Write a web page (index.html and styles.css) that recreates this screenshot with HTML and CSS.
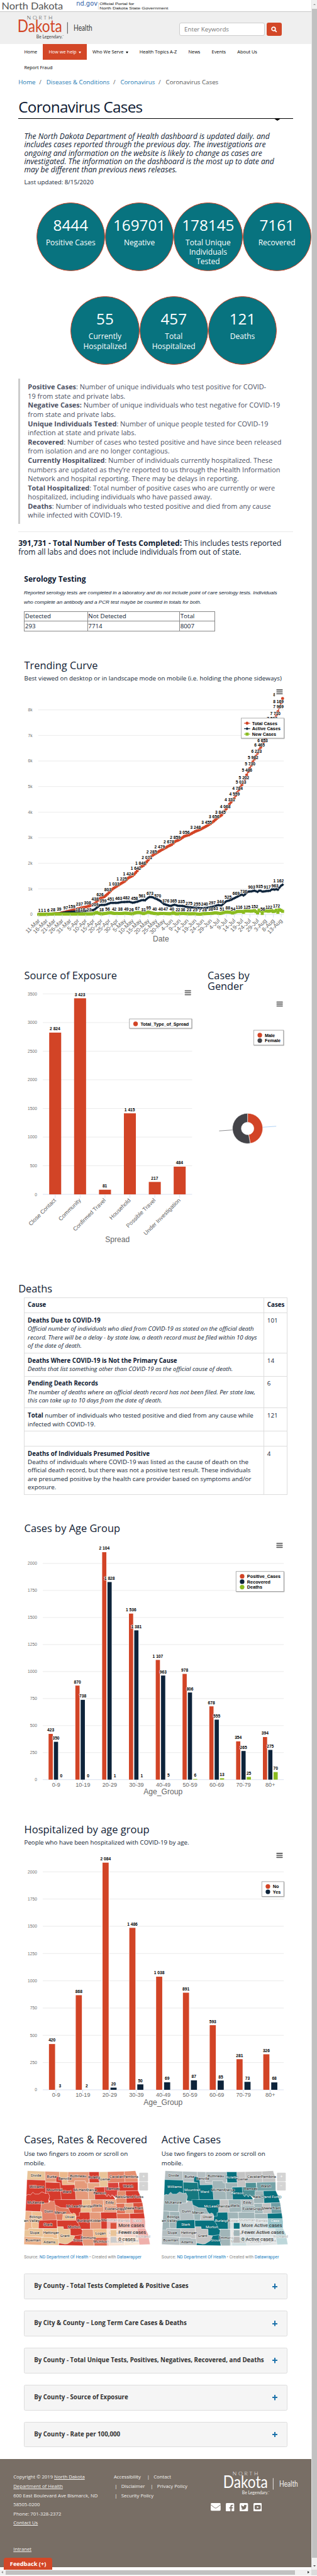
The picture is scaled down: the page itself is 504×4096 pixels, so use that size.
FILE: index.html
```html
<!DOCTYPE html>
<html lang="en">
<head>
<meta charset="utf-8">
<title>Coronavirus Cases | Department of Health</title>
<link rel="stylesheet" href="styles.css">
</head>
<body>
<div class="window">
<div class="page">
  <div class="topbar">
    <svg width="460" height="31" viewBox="0 0 460 31">
      <text x="4" y="24.5" class="tb-nd" font-size="26.5" textLength="161" lengthAdjust="spacingAndGlyphs">North Dakota</text>
      <text x="199.500" y="14.500" class="tb-gov" font-size="16" textLength="56" lengthAdjust="spacingAndGlyphs">nd.gov</text>
      <path d="M257.500 6v19" stroke="#bbb"/>
      <text x="260.500" y="14" class="tb-off" font-size="9.600" textLength="91" lengthAdjust="spacingAndGlyphs">Official Portal for</text>
      <text x="260.500" y="24.700" class="tb-off" font-size="9.600" textLength="180" lengthAdjust="spacingAndGlyphs">North Dakota State Government</text>
    </svg>
  </div>
  <header class="header">
    <svg class="logo logo-dark" width="200" height="70" viewBox="0 0 200 70">
      <text class="lg-north" x="22.5" y="14.5" font-size="14" textLength="67">NORTH</text>
      <text class="lg-main" x="-2" y="47" font-size="44" textLength="117" lengthAdjust="spacingAndGlyphs">Dakota</text>
      <text class="lg-small" x="47.5" y="65" font-size="11.3" textLength="69" lengthAdjust="spacingAndGlyphs">Be Legendary.</text>
      <text class="lg-small" x="116" y="60" font-size="4">™</text>
      <path class="lg-bar" d="M129 22v30"/>
      <text class="lg-dept" x="145" y="44.5" font-size="20.5" textLength="49" lengthAdjust="spacingAndGlyphs">Health</text>
    </svg>
    <form class="search">
      <div class="field">Enter Keywords</div>
      <div class="go"><svg width="16" height="16" viewBox="0 0 16 16"><circle cx="6.500" cy="6.500" r="4.700"/><path d="M10 10l4.500 4.500"/></svg></div>
    </form>
  </header>
  <nav class="nav">
    <a>Home</a><a class="active">How we help <i class="caret"></i></a><a>Who We Serve <i class="caret"></i></a><a>Health Topics A-Z</a><a>News</a><a>Events</a><a>About Us</a><a>Report Fraud</a>
  </nav>
  <div class="crumbs"><a>Home</a><s>/</s><a>Diseases &amp; Conditions</a><s>/</s><a>Coronavirus</a><s>/</s><span>Coronavirus Cases</span></div>
  <h1>Coronavirus Cases</h1>
  <p class="intro">The North Dakota Department of Health dashboard is updated daily. and<br>includes cases reported through the previous day. The investigations are<br>ongoing and information on the website is likely to change as cases are<br>investigated. The information on the dashboard is the most up to date and<br>may be different than previous news releases.</p>
  <p class="updated">Last updated: 8/15/2020</p>
  <div class="circles">
    <div class="circle"><b>8444</b><span>Positive Cases</span></div>
    <div class="circle"><b>169701</b><span>Negative</span></div>
    <div class="circle"><b>178145</b><span>Total Unique<br>Individuals<br>Tested</span></div>
    <div class="circle"><b>7161</b><span>Recovered</span></div>
  </div>
  <div class="circles second">
    <div class="circle"><b>55</b><span>Currently<br>Hospitalized</span></div>
    <div class="circle"><b>457</b><span>Total<br>Hospitalized</span></div>
    <div class="circle"><b>121</b><span>Deaths</span></div>
  </div>
  <blockquote><strong>Positive Cases</strong>: Number of unique individuals who test positive for COVID-<br>19 from state and private labs.<br><strong>Negative Cases:</strong> Number of unique individuals who test negative for COVID-19<br>from state and private labs.<br><strong>Unique Individuals Tested</strong>: Number of unique people tested for COVID-19<br>infection at state and private labs.<br><strong>Recovered</strong>: Number of cases who tested positive and have since been released<br>from isolation and are no longer contagious.<br><strong>Currently Hospitalized</strong>: Number of individuals currently hospitalized. These<br>numbers are updated as they’re reported to us through the Health Information<br>Network and hospital reporting. There may be delays in reporting.<br><strong>Total Hospitalized</strong>: Total number of positive cases who are currently or were<br>hospitalized, including individuals who have passed away.<br><strong>Deaths</strong>: Number of individuals who tested positive and died from any cause<br>while infected with COVID-19.</blockquote>
  <div class="rule"></div>
  <p class="tests"><strong>391,731 - Total Number of Tests Completed:</strong> This includes tests reported<br>from all labs and does not include individuals from out of state.</p>
  <h4 class="serology">Serology Testing</h4>
  <p class="note">Reported serology tests are completed in a laboratory and do not include point of care serology tests. Individuals<br>who complete an antibody and a PCR test maybe be counted in totals for both.</p>
  <table class="sero">
    <tr><td>Detected</td><td>Not Detected</td><td>Total</td></tr>
    <tr><td>293</td><td>7714</td><td>8007</td></tr>
  </table>

  <h3 class="trend-title">Trending Curve</h3>
  <p class="sub">Best viewed on desktop or in landscape mode on mobile (i.e. holding the phone sideways)</p>
  <svg class="chart" id="trend" width="815" height="741" viewBox="0 1789 815 741"></svg>

  <div class="pair">
    <section><h3>Source of Exposure</h3>
      <svg class="chart" id="exposure" width="530" height="741" viewBox="0 2569 530 741"></svg></section>
    <section class="gender"><h3>Cases by<br>Gender</h3>
      <svg class="chart" id="gender" width="285" height="712" viewBox="530 2598 285 712"></svg></section>
  </div>

  <h3 class="deaths-title">Deaths</h3>
  <table class="deaths">
    <tr class="r0"><th>Cause</th><th>Cases</th></tr>
    <tr class="r1"><td><strong>Deaths Due to COVID-19</strong><br><em>Official number of individuals who died from COVID-19 as stated on the official death<br>record. There will be a delay - by state law, a death record must be filed within 10 days<br>of the date of death.</em></td><td>101</td></tr>
    <tr class="r2"><td><strong>Deaths Where COVID-19 is Not the Primary Cause</strong><br><em>Deaths that list something other than COVID-19 as the official cause of death.</em></td><td>14</td></tr>
    <tr class="r3"><td><strong>Pending Death Records</strong><br><em>The number of deaths where an official death record has not been filed. Per state law,<br>this can take up to 10 days from the date of death.</em></td><td>6</td></tr>
    <tr class="r4"><td><strong>Total</strong> number of individuals who tested positive and died from any cause while<br>infected with COVID-19.</td><td>121</td></tr>
    <tr class="r5"><td></td><td></td></tr>
    <tr class="r6"><td><strong>Deaths of Individuals Presumed Positive</strong><br>Deaths of individuals where COVID-19 was listed as the cause of death on the<br>official death record, but there was not a positive test result. These individuals<br>are presumed positive by the health care provider based on symptoms and/or<br>exposure.</td><td>4</td></tr>
  </table>

  <h3 class="age-title">Cases by Age Group</h3>
  <svg class="chart" id="age" width="815" height="746" viewBox="0 4014 815 746"></svg>

  <h3 class="hosp-title">Hospitalized by age group</h3>
  <p class="sub hosp-sub">People who have been hospitalized with COVID-19 by age.</p>
  <svg class="chart" id="hosp" width="815" height="725" viewBox="0 4835 815 725"></svg>

  <div class="maps">
    <section><h3>Cases, Rates &amp; Recovered</h3><p>Use two fingers to zoom or scroll on<br>mobile.</p>
      <svg class="chart map" id="map-cases" width="335" height="217" viewBox="63 5673 335 217"></svg>
      <div class="source">Source: <a>ND Department Of Health</a> • Created with <a>Datawrapper</a></div></section>
    <section><h3>Active Cases</h3><p>Use two fingers to zoom or scroll on<br>mobile.</p>
      <svg class="chart map" id="map-active" width="335" height="217" viewBox="63 5673 335 217"></svg>
      <div class="source">Source: <a>ND Department Of Health</a> • Created with <a>Datawrapper</a></div></section>
  </div>

  <div class="panels">
    <div class="panel"><span>By County - Total Tests Completed &amp; Positive Cases</span><i class="plus"></i></div>
    <div class="panel"><span>By City &amp; County – Long Term Care Cases &amp; Deaths</span><i class="plus"></i></div>
    <div class="panel"><span>By County - Total Unique Tests, Positives, Negatives, Recovered, and Deaths</span><i class="plus"></i></div>
    <div class="panel"><span>By County - Source of Exposure</span><i class="plus"></i></div>
    <div class="panel"><span>By County - Rate per 100,000</span><i class="plus"></i></div>
  </div>

  <footer class="footer">
    <div class="f-left">Copyright © 2019 <u>North Dakota</u><br><u>Department of Health</u><br>600 East Boulevard Ave Bismarck, ND<br>58505-0200<br>Phone: 701-328-2372<br><u>Contact Us</u><div class="intranet"><u>Intranet</u></div></div>
    <div class="f-mid">
      <div><span class="first">Accessibility</span><s>|</s><span>Contact</span></div>
      <div><s>|</s><span>Disclaimer</span><s class="gap">|</s><span>Privacy Policy</span></div>
      <div><s>|</s><span>Security Policy</span></div>
    </div>
    <div class="f-right">
      <svg class="logo logo-light" width="200" height="70" viewBox="0 0 200 70">
        <text class="lg-north" x="22.5" y="14.5" font-size="14" textLength="67">NORTH</text>
        <text class="lg-main" x="-2" y="47" font-size="44" textLength="117" lengthAdjust="spacingAndGlyphs">Dakota</text>
        <text class="lg-small" x="47.5" y="65" font-size="11.3" textLength="69" lengthAdjust="spacingAndGlyphs">Be Legendary.</text>
        <text class="lg-small" x="116" y="60" font-size="4">™</text>
        <path class="lg-bar" d="M129 22v30"/>
        <text class="lg-dept" x="145" y="44.5" font-size="20.5" textLength="49" lengthAdjust="spacingAndGlyphs">Health</text>
      </svg>
      <div class="social">
        <svg width="26" height="20" viewBox="0 0 26 20"><rect width="26" height="20" rx="2.500" fill="#fff"/><path d="M0 4.500l10.500 8q2.500 1.800 5 0L26 4.500" fill="none" stroke="#786e65" stroke-width="1.500"/></svg>
        <svg width="22" height="22" viewBox="0 0 22 22"><rect width="22" height="22" rx="2.500" fill="#fff"/><path d="M12 22v-8H9v-3h3V8.500Q12 4.500 16 4.500h3v3h-2.200q-1.500 0-1.500 1.500v2H19l-.5 3h-3.200v8z" fill="#786e65"/></svg>
        <svg width="22" height="22" viewBox="0 0 22 22"><rect width="22" height="22" rx="2.500" fill="#fff"/><path d="M4 5.500q3 3.200 7 3.400Q10.600 5 14 4.700q1.500 0 2.500 1l2-.7-1 1.700 1.500-.3-1.500 1.600Q17.500 17 9 17.300q-3 0-5.500-1.500 2.700 0 4.200-1.300-2-.3-2.700-2h1.200Q4 11.500 3.900 9.300l1.200.3Q3 7.800 4 5.500" fill="#786e65"/></svg>
        <svg width="22" height="22" viewBox="0 0 22 22"><rect width="22" height="22" rx="2.500" fill="#fff"/><rect x="3" y="5" width="16" height="12" rx="3" fill="#786e65"/><path d="M9.300 8.200v5.600l4.800-2.800z" fill="#fff"/></svg>
      </div>
    </div>
    <div class="feedback">Feedback (+)</div>
  </footer>
</div>
<div class="vscroll"><i class="up"></i><b></b><i class="down"></i></div>
<div class="hscroll"><i class="left"></i><b></b><i class="right"></i></div>
<div class="corner"></div>
</div>
<script src="charts.js"></script>
</body>
</html>
```
FILE: styles.css
```css
* { box-sizing: border-box; }
html { overflow: hidden; background: #fff; }
body { margin: 0; zoom: .6072; width: 830px; height: 6744px; overflow: hidden; font: 16px/24px "Open Sans", sans-serif; color: #0f1b33; white-space: nowrap; }
h1, h3, h4, p, blockquote { margin: 0; font-weight: 400; }
s { text-decoration: none; }
i { font-style: normal; }
svg { display: block; }
.window { width: 830px; height: 6744px; display: grid; grid-template-columns: 815px 15px; grid-template-rows: 6729px 15px; overflow: hidden; }
.page { width: 815px; height: 6729px; overflow: hidden; display: flex; flex-direction: column; align-items: flex-start; }
.page > * { flex: none; }

.topbar { width: 815px; height: 32px; border-bottom: 1px solid #c8c8c8; }
.tb-nd { font-family: Lato, sans-serif; fill: #555; }
.tb-gov { font-family: "DejaVu Sans", sans-serif; fill: #2f62a8; }
.tb-off { font-family: "Liberation Sans", sans-serif; fill: #4a4a4a; stroke: #4a4a4a; stroke-width: .2; }
.header { width: 815px; height: 84px; background: #efefef; display: flex; justify-content: space-between; padding: 5px 77px 0 48px; }
.logo { font-family: Lato, sans-serif; overflow: visible; }
.logo-dark { color: #3d3d3d; --main: #d24626; }
.logo-light { color: #f2f0ee; --main: #fff; }
.lg-main { fill: var(--main); }
.lg-north, .lg-small, .lg-dept { fill: currentColor; }
.lg-north { font-weight: 300; }
.lg-bar { stroke: currentColor; stroke-width: 1.500; }
.search { display: flex; gap: 4px; padding-top: 23px; }
.field { width: 224px; height: 34px; border: 1px solid #ccc; border-radius: 5px; background: #fff; color: #757575; padding: 4px 11px; }
.go { width: 40px; height: 34px; border-radius: 5px; background: #d34727; display: flex; align-items: center; justify-content: center; }
.go svg { fill: none; stroke: #fff; stroke-width: 2.800; }

.nav { width: 720px; height: 80px; margin-left: 48.300px; display: flex; flex-wrap: wrap; font-size: 12.150px; color: #000; }
.nav a { height: 40px; line-height: 40px; padding: 0 15px; }
.nav .active { background: #d34727; color: #fff; }
.caret { display: inline-block; border: 4px solid transparent; border-top: 5px solid; border-bottom: 0; margin-left: 2px; vertical-align: 1px; }

.crumbs { margin: 9px 0 0 48px; display: flex; color: #1d7ab3; }
.crumbs s { color: #666; padding: 0 13px 0 9.500px; }
.crumbs span { color: #555; }
h1 { width: 720px; height: 54px; margin: 28px 0 0 48px; font-size: 40px; line-height: 45px; letter-spacing: -1.150px; color: #0e1a33; border-bottom: 1.600px solid #000; position: relative; }
h1::after { content: ""; position: absolute; right: 32px; top: 100%; border: 11px solid transparent; border-top: 7px solid #000; border-bottom: 0; }
.intro { margin: 35px 0 0 63.500px; font-size: 19.900px; line-height: 22px; font-style: italic; }
.updated { margin: 10px 0 0 63.500px; }

.circles { display: flex; margin: 40px 0 0 95px; }
.circles.second { margin: 66px 0 0 185px; }
.circle { width: 180px; height: 180px; border-radius: 50%; border: 3px solid #d04427; background: #08737f; color: #fff; display: flex; flex-direction: column; text-align: center; padding-top: 33px; }
.circle b { font-weight: 400; font-size: 40px; line-height: 50px; }
.circle span { font-size: 19.800px; line-height: 25px; padding-top: 8px; }

blockquote { width: 720px; height: 380px; margin: 36px 0 0 48px; border-left: 5px solid #ccc; padding: 10px 20px; font-size: 18px; line-height: 24px; color: #4b4f62; }
.rule { width: 720px; height: 1.600px; margin: 20px 0 -.6px 48px; background: #e9e9e9; }
.tests { margin: 19px 0 0 48px; font-size: 19.850px; line-height: 22.200px; }
.serology { margin: 49px 0 0 63px; font-size: 19.850px; font-weight: 700; }
.note { margin: 10px 0 0 62.500px; font: italic 13.340px/26px "Liberation Sans", sans-serif; }
table { border-collapse: collapse; table-layout: fixed; }
.sero { width: 500px; height: 51px; margin: 9.500px 0 0 63px; border: 1.600px solid #222; font-size: 16.100px; }
.sero td { border: 1.600px solid #888; padding: 0 1px; height: 25.300px; line-height: 22px; }
.sero td:nth-child(1) { width: 165.500px; }
.sero td:nth-child(2) { width: 241px; }

h3 { font-size: 27.050px; line-height: 30px; }
.trend-title { margin: 74px 0 0 63.500px; }
.sub { margin: 9px 0 0 63.500px; font-size: 16.170px; }
.chart { font-family: "Liberation Sans", Arial, sans-serif; overflow: hidden; }
.pair { display: flex; height: 780px; }
.pair section { padding-top: 10px; width: 530px; }
.pair .gender { width: 285px; }
.pair h3 { line-height: 29px; margin-left: 63.500px; font-size: 26.930px; }
.pair .gender h3 { margin-left: 13.500px; }

.deaths-title { margin: 48px 0 0 48px; }
.deaths { width: 690px; height: 516px; margin: 8px 0 0 63px; font-size: 16.100px; line-height: 22px; }
.deaths th, .deaths td { border: 1.600px solid #ddd; padding: 8px 8px 0; text-align: left; vertical-align: top; }
.deaths th:first-child, .deaths td:first-child { width: 627px; }
.deaths strong { font-size: 15.950px; }
.deaths em { font-size: 15.800px; }
.r0 { height: 40.500px; } .r1 { height: 105px; } .r2 { height: 60.500px; } .r3 { height: 83.500px; }
.r4 { height: 60.500px; } .r5 { height: 39px; } .r6 { height: 127px; }

.age-title { margin: 72px 0 0 63.500px; }
.hosp-title { margin: 13px 0 0 63.500px; font-size: 27.200px; }
.hosp-sub { margin-top: 8px; font-size: 16.040px; }

.maps { display: flex; margin-left: 63px; height: 358px; padding-top: 26px; }
.maps section { width: 360px; }
.maps p { margin-top: 9px; font-size: 16.230px; line-height: 24px; }
.map { font-family: Roboto, sans-serif; }
.source { font: 11.290px/20px Roboto, sans-serif; color: #888; margin-top: 8px; }
.source a { color: #1d81c2; }

.panels { margin: 34px 0 0 63px; width: 690px; display: flex; flex-direction: column; gap: 30.500px; }
.panel { height: 66.500px; border: 1px solid #ddd; border-bottom: 3px solid #ddd; border-radius: 4px; background: #f5f5f5; color: #333; font-size: 16px; font-weight: 700; display: flex; align-items: center; justify-content: space-between; padding: 0 25px 0 24.500px; }
.plus { width: 14px; height: 14px; background: linear-gradient(#1d72aa, #1d72aa) center/14px 3.300px no-repeat, linear-gradient(#1d72aa, #1d72aa) center/3.300px 14px no-repeat; }

.footer { margin-top: 30.500px; width: 815px; height: 283px; background: #786e65; color: #f3f1ef; font-size: 12.700px; line-height: 24px; display: flex; position: relative; padding-top: 35.500px; }
.f-left { width: 263px; padding-left: 35px; }
.intranet { margin-top: 44.500px; }
.f-mid { width: 289px; padding-left: 35px; }
.f-mid div { display: flex; }
.f-mid s { padding: 0 10.500px 0 2px; }
.f-mid .first + s { padding-left: 16px; }
.f-mid .gap { padding-left: 14.500px; }
.f-right { margin-top: -8px; }
.f-right .logo { margin-left: 35px; }
.social { display: flex; align-items: center; gap: 14px; margin-top: 17.500px; }
.feedback { position: absolute; left: 10px; bottom: -8px; width: 127px; height: 33px; border-radius: 6px 6px 0 0; background: #d34727; color: #fff; font-size: 15.200px; font-weight: 700; line-height: 33px; text-align: center; }

.vscroll { background: #f1f1f1; display: flex; flex-direction: column; align-items: center; border-left: 1px solid #e6e6e6; }
.vscroll b { width: 12px; height: 6675px; background: #c1c1c1; margin: 9px 0 20px; }
.up, .down { border: 4px solid transparent; height: 4px; }
.up { margin-top: 10px; border-bottom-color: #999; border-top: 0; }
.down { border-top-color: #444; border-bottom: 0; }
.hscroll { background: #f1f1f1; display: flex; align-items: center; }
.hscroll b { width: 757px; height: 12px; background: #c1c1c1; margin: 0 35px 0 6px; }
.left, .right { border: 4px solid transparent; }
.left { border-right: 5px solid #999; border-left: 0; margin-left: 4px; }
.right { border-left: 5px solid #333; border-right: 0; margin-left: -2px; }
.corner { background: #dcdcdc; }

.grid { stroke: #e3e3e3; stroke-width: 1.200; fill: none; }
.axis { stroke: #ccd6eb; stroke-width: 1.200; fill: none; }
.ylab { font-size: 11px; fill: #707070; text-anchor: end; }
.xlab { font-size: 15px; fill: #666; text-anchor: middle; }
.xrot { text-anchor: end; }
.title { font-size: 20px; fill: #666; text-anchor: middle; }
.dl { font-size: 11px; font-weight: 700; fill: #000; text-anchor: middle; stroke: #fff; stroke-width: 2px; paint-order: stroke; stroke-linejoin: round; }
.leg { font-size: 12px; font-weight: 700; fill: #000; }
.legbox { fill: #fff; stroke: #999; stroke-width: 1.200; filter: drop-shadow(1px 1px 1px rgba(0,0,0,.35)); }
.burger { stroke: #666; stroke-width: 3; stroke-linecap: round; }
.county { stroke: #fff; stroke-opacity: .6; stroke-width: 2.500; stroke-linejoin: round; }
.cl { font-size: 30px; fill: #222; text-anchor: middle; stroke: #fff; stroke-opacity: .55; stroke-width: 7; paint-order: stroke; stroke-linejoin: round; }
.cl.inv { fill: #fff; stroke: #045560; }
.ml { font-size: 39px; fill: #222; }
.zb { fill: #d4d4d4; }
.zt { font-size: 34px; fill: #fff; text-anchor: middle; }
```
FILE: charts.js
```js
// Chart drawing: every helper returns SVG markup, coordinates are page pixels.
const RED = '#d24426', NAVY = '#0d233a', GREEN = '#8bbc21';
const K = 1.8892;                       // horizontal units per page pixel in the data tables
const put = (id, html) => { document.getElementById(id).innerHTML = html; };
const txt = (cls, x, y, s, extra = '') => `<text class="${cls}" x="${x}" y="${y}" ${extra}>${s}</text>`;
const fmt = n => n > 999 ? Math.floor(n / 1000) + ' ' + String(n % 1000).padStart(3, '0') : String(n);
const burger = (x, y) => `<path class="burger" d="M${x} ${y}h14M${x} ${y + 5.1}h14M${x} ${y + 10.2}h14"/>`;

function gridLines(x1, x2, y0, unit, step, max, labelX, k) {
  let s = '';
  for (let v = 0; v <= max; v += step) {
    const y = y0 - v * unit;
    if (v) s += `<path class="grid" d="M${x1} ${y}H${x2}"/>`;
    s += txt('ylab', labelX, y + 4, k && v ? v / 1000 + 'k' : v);
  }
  return s + `<path class="axis" d="M${x1} ${y0}H${x2}"/>`;
}
function legend(x, y, w, h, names, colors, first) {
  let s = `<rect class="legbox" x="${x}" y="${y}" width="${w}" height="${h}"/>`;
  names.forEach((n, i) => {
    const cy = first + i * 14.1;
    s += `<circle cx="${x + 16}" cy="${cy}" r="6" fill="${colors[i]}"/>` + txt('leg', x + 29, cy + 4.6, n);
  });
  return s;
}

// Trending curve
(() => {
  const total = [[192,1],[240,6],[292,39],[325,97],[355,159],[393,237],[433,308],[455,365],[470,438],[495,626],[518,700],[533,803],[557,1000],[564,1033],[602,1225],[618,1300],[634,1424],[658,1520],[672,1642],[695,1848],[715,1940],[727,2071],[750,2285],[790,2479],[835,2678],[850,2730],[867,2859],[885,2910],[912,3056],[935,3110],[967,3248],[990,3320],[1022,3455],[1040,3540],[1059,3656],[1075,3770],[1097,3890],[1114,4068],[1137,4331],[1160,4559],[1175,4784],[1192,5013],[1207,5202],[1222,5486],[1237,5730],[1252,5982],[1269,6223],[1284,6465],[1299,6653],[1314,6900],[1330,7180],[1346,7503],[1362,7710],[1377,7969],[1385,8169],[1398,8444]];
  const active = [[192,1],[240,6],[292,30],[325,85],[355,105],[393,120],[433,145],[465,175],[480,270],[495,370],[520,370],[548,451],[580,450],[600,480],[640,495],[657,455],[680,500],[705,565],[717,550],[738,685],[755,673],[775,600],[792,535],[812,400],[845,325],[862,385],[880,338],[905,330],[930,285],[975,255],[1000,240],[1030,262],[1060,310],[1078,370],[1095,344],[1118,510],[1140,560],[1168,669],[1195,780],[1206,736],[1225,890],[1245,903],[1258,930],[1275,880],[1285,945],[1298,890],[1322,917],[1335,920],[1348,1000],[1355,960],[1368,990],[1377,960],[1385,1090],[1398,1162]];
  const fresh = [[192,1],[240,6],[262,20],[355,16],[409,18],[440,20],[465,25],[476,85],[490,40],[502,18],[530,50],[547,70],[560,42],[595,38],[625,49],[655,22],[670,67],[690,80],[710,31],[733,95],[750,55],[780,22],[795,40],[845,25],[857,65],[870,22],[905,36],[935,23],[960,30],[989,7],[1005,28],[1042,38],[1067,63],[1090,35],[1115,95],[1140,88],[1150,54],[1175,120],[1198,116],[1205,80],[1213,140],[1245,125],[1260,152],[1274,56],[1282,170],[1290,130],[1297,35],[1306,150],[1330,122],[1348,165],[1353,90],[1368,172],[1375,80],[1383,190],[1398,120]];
  const y0 = 2393.4, u = .06696;
  const at = (d, x) => { for (let i = 1; i < d.length; i++) if (x <= d[i][0]) { const [a, b] = [d[i - 1], d[i]]; return a[1] + (b[1] - a[1]) * (x - a[0]) / (b[0] - a[0]); } return d[d.length - 1][1]; };
  let s = gridLines(100, 743, y0, u, 1000, 8000, 85, true);
  const series = (d, color, mark) => {
    let p = '', m = '';
    for (let i = 0; i < 157; i++) {
      const cx = 192 + i * 7.73, x = cx / K, y = y0 - at(d, cx) * u;
      p += (i ? 'L' : 'M') + x.toFixed(1) + ' ' + y.toFixed(1);
      m += mark(x, y);
    }
    s += `<path d="${p}" fill="none" stroke="${color}" stroke-width="2"/><g fill="${color}">${m}</g>`;
  };
  series(total, RED, (x, y) => `<circle cx="${x}" cy="${y}" r="4"/>`);
  series(active, NAVY, (x, y) => `<path d="M${x} ${y - 4}l4 4-4 4-4-4z"/>`);
  series(fresh, GREEN, (x, y) => `<rect x="${x - 4}" y="${y - 4}" width="8" height="8"/>`);
  const lab = list => list.forEach(([x, v, y]) => { s += txt('dl', x / K, y ? 1700 + y / 1.96 + 4 : y0 - v * u - 6.5, fmt(v)); });
  lab([[325,97],[355,159],[393,237],[433,308],[470,438],[495,626],[533,803],[564,1033],[602,1225],[634,1424],[672,1642],[695,1848],[727,2071],[750,2285],[790,2479],[835,2678],[867,2859],[912,3056],[967,3248],[1022,3455],[1059,3656],[1090,3845],[1114,4068],[1137,4331],[1160,4559],[1175,4784],[1192,5013],[1207,5202],[1222,5486],[1237,5730],[1252,5982],[1269,6223],[1284,6465],[1299,6653],[1346,7503],[1362,7710],[1377,7969],[1377,8169],[1378,8444]]);
  lab([[470,209,1310],[510,359],[548,451],[587,463],[625,482],[665,458],[703,561],[742,673],[780,570],[820,376],[858,365],[897,335],[935,275],[975,255],[1012,240],[1050,297],[1090,344],[1128,525],[1168,669],[1205,736],[1245,903],[1283,935],[1322,917],[1360,963],[1378,1162]]);
  lab([[195,1],[208,1],[222,1],[239,6],[262,28],[292,39],[385,18],[409,18],[440,23],[502,18],[532,56],[565,42],[595,38],[625,49],[650,26],[680,67],[710,31],[735,95],[765,40],[795,40],[820,47],[850,40],[880,22],[905,36],[935,23],[965,25],[989,7],[1012,28],[1042,38],[1067,63],[1098,51],[1127,88],[1153,54],[1183,116],[1222,125],[1260,152],[1300,56],[1330,122],[1368,172]]);
  let d = new Date(2020, 2, 11);
  for (let i = 0; i < 32; i++) {
    const x = (192 + i * 38.68) / K;
    s += `<path class="axis" d="M${x} ${y0}v8"/>`;
    const name = d.getDate() + '-' + ['Mar', 'Apr', 'May', 'Jun', 'Jul', 'Aug'][d.getMonth() - 2];
    s += txt('xlab xrot', 0, 0, name, `transform="translate(${x + 4},2411) rotate(-45)"`);
    d.setDate(d.getDate() + 5);
  }
  s += txt('title', 421.5, 2464, 'Date');
  s += `<rect x="720" y="1800" width="24" height="22" fill="#fff"/>` + burger(725, 1805.5);
  s += `<rect class="legbox" x="631.500" y="1879.500" width="112" height="52.500"/>`;
  ['Total Cases', 'Active Cases', 'New Cases'].forEach((n, i) => {
    const cy = 1892.8 + i * 14.2, c = [RED, NAVY, GREEN][i];
    s += `<path d="M639 ${cy}h16" stroke="${c}" stroke-width="2"/>` + [`<circle cx="647" cy="${cy}" r="4" fill="${c}"/>`, `<path d="M647 ${cy - 4}l4 4-4 4-4-4z" fill="${c}"/>`, `<rect x="643" y="${cy - 4}" width="8" height="8" fill="${c}"/>`][i] + txt('leg', 660, cy + 4.4, n);
  });
  put('trend', s);
})();

// Source of exposure
(() => {
  const y0 = 3127.5, u = .15, data = [['Close Contact', 2824], ['Community', 3423], ['Confirmed Travel', 81], ['Household', 1415], ['Possible Travel', 217], ['Under Investigation', 484]];
  let s = gridLines(112, 503, y0, u, 500, 3500, 97);
  data.forEach(([n, v], i) => {
    const x = 144.5 + i * 65.2, h = v * u;
    s += `<rect x="${x - 15.7}" y="${y0 - h}" width="31.400" height="${h}" fill="${RED}"/>` + `<path class="axis" d="M${x} ${y0}v9"/>`;
    s += txt('dl', x - .5, y0 - h - 6, fmt(v)) + txt('xlab xrot', 0, 0, n, `transform="translate(${x + 3},3144) rotate(-45)"`);
  });
  s += txt('title', 307.5, 3253, 'Spread');
  s += '<rect x="480" y="2590" width="24" height="20" fill="#fff"/>' + burger(485, 2594.3);
  s += legend(339, 2668, 163, 24.5, ['Total_Type_of_Spread'], [RED], 2681);
  put('exposure', s);
})();

// Gender donut
(() => {
  const cx = 648, cy = 2954.3, R = 39.7, r = 16.4, a = 170 * Math.PI / 180;
  const P = (q, t) => `${cx + q * Math.sin(t)} ${cy - q * Math.cos(t)}`;
  const arc = (t1, t2, big, c) => `<path d="M${P(R, t1)}A${R} ${R} 0 ${big} 1 ${P(R, t2)}L${P(r, t2)}A${r} ${r} 0 ${big} 0 ${P(r, t1)}z" fill="${c}" stroke="#fff"/>`;
  let s = arc(0, a, 0, RED) + arc(a, 2 * Math.PI, 1, '#434348');
  s += '<path d="M688 2951L723 2948.500" stroke="#7cb5ec"/><path d="M608 2958.200L573.500 2960.700" stroke="#434348"/>';
  s += burger(725, 2623.4) + legend(664, 2697, 78, 39, ['Male', 'Female'], [RED, '#434348'], 2710);
  put('gender', s);
})();

// Grouped columns by age
const AGES = ['0-9', '10-19', '20-29', '30-39', '40-49', '50-59', '60-69', '70-79', '80+'];
function ageChart(y0, u, series, width, offsets, colors) {
  let s = gridLines(112, 743, y0, u, 250, 2000, 97), labels = '';
  AGES.forEach((n, i) => {
    const c = 147 + i * 70.1;
    s += `<path class="axis" d="M${c - .5} ${y0}v9"/>` + txt('xlab', c, y0 + 19, n);
    series.forEach((d, k) => {
      const x = 127 + offsets[k] + i * 70.15, h = d[i] * u;
      if (h > 1.5) s += `<rect x="${x - 1}" y="${y0 - h}" width="${width + 2}" height="${h}" fill="#fff"/><rect x="${x}" y="${y0 - h}" width="${width}" height="${h}" fill="${colors[k]}"/>`;
      labels += txt('dl', x + width / 2, y0 - h - 6, fmt(d[i]));
    });
  });
  return s + labels + txt('title', 427, y0 + 39, 'Age_Group');
}
put('age', ageChart(4657.5, .2831, [[423,870,2104,1536,1107,978,678,354,394],[350,738,1828,1381,963,806,555,265,275],[0,0,1,1,5,6,13,25,70]], 11, [0.2, 14.1, 28], [RED, NAVY, GREEN])
  + burger(725, 4038.8) + legend(618, 4112.5, 125, 52, ['Positive_Cases', 'Recovered', 'Deaths'], [RED, NAVY, GREEN], 4125));
put('hosp', ageChart(5470.6, .28545, [[420,868,2084,1486,1038,891,593,281,326],[3,2,20,50,69,87,85,73,68]], 16, [1.2, 22], [RED, NAVY])
  + burger(725, 4851.5) + legend(685.5, 4925.5, 57.5, 38.5, ['No', 'Yes'], [RED, NAVY], 4938));

// County maps: name, label x, label y, outline, cases colour, active colour
const R = '#d63b2d', T = '#e9c498', O = '#e59a7a', G = '#a1b5b8', N = '#c3c3c3', L = '#b4bec1', B = '#08727f';
const COUNTIES = [
['Divide',104,56,'37,22 174,27 177,96 33,92',T,L],
['Burke',228,68,'174,27 289,30 288,68 262,82 262,110 178,112',O,L],
['Renville',332,83,'289,30 356,31 354,115 408,118 408,132 310,133 308,95 288,80','#ecb98c',L],
['Bottineau',435,65,'356,31 520,31 520,115 508,118 490,118 490,101 408,101 408,118 354,115',O,L],
['Rolette',562,71,'520,31 600,31 602,115 524,115',R,B],
['Towner',640,90,'600,31 666,30 668,117 670,148 606,148 602,115',T,N],
['Cavalier',735,67,'666,30 797,27 803,112 668,117','#e38569',N],
['Pembina',849,66,'797,27 885,22 892,45 903,75 904,110 803,112','#e58f70',N],
['McKenzie',101,271,'28,215 45,207 60,212 80,190 95,205 125,205 150,188 180,200 200,195 212,222 203,255 205,275 146,278 140,342 22,338',R,G],
['Williams',111,149,'33,92 177,96 180,200 150,188 125,205 95,205 80,190 60,212 45,207 28,215',R,B],
['Mountrail',250,172,'178,112 293,115 303,248 250,258 232,265 205,255 212,222 200,195 180,200',R,'#15787f'],
['Ward',347,187,'262,68 288,68 308,95 310,133 408,132 418,248 303,248 293,115 262,110',R,B],
['McHenry',458,172,'408,101 490,101 492,118 508,118 514,190 518,248 418,248 408,132',O,G],
['Pierce',540,172,'508,118 604,118 606,148 563,150 568,248 518,248 514,190','#e7a785',G],
['Nelson',774,227,'742,182 808,180 815,276 735,278 730,248 742,235','#e38c6c',G],
['Benson',605,196,'563,152 642,150 645,205 662,225 672,207 690,228 700,210 720,234 728,248 568,248',R,B],
['Ramsey',709,161,'668,117 750,115 757,180 742,182 742,235 720,225 700,210 690,228 672,207 662,225 645,205 642,150 670,148','#d9413a','#4f9196'],
['Walsh',829,143,'755,114 904,110 905,178 757,180',R,'#76a3a8'],
['Grand Forks',868,224,'808,180 905,178 922,215 938,272 815,276',R,B],
['Dunn',204,341,'146,278 205,275 215,258 245,262 255,258 258,330 265,408 153,412 150,345 140,342','#e38369',L],
['Mercer',295,350,'255,290 300,312 360,318 370,345 385,362 316,365 313,410 265,408 258,330','#e07a5e',G],
['McLean',396,299,'245,248 466,250 468,310 455,348 445,350 445,380 420,380 410,358 388,362 370,345 358,315 300,312 255,290',R,B],
['Sheridan',499,299,'466,250 533,250 540,348 455,348 455,310 468,310','#ecbd8f',N],
['Wells',587,296,'533,250 632,250 636,345 540,348',O,G],
['Eddy',683,272,'632,250 730,248 735,278 735,297 636,300','#e8a684',L],
['Foster',688,320,'636,300 735,297 738,345 636,347',O,G],
['Griggs',770,318,'735,280 800,278 806,357 740,358','#df6f55',G],
['Steele',835,317,'800,278 865,276 872,356 806,357','#e7a785',N],
['Traill',910,314,'866,275 940,272 952,355 872,356','#d94f3a','#709ea5'],
['Billings',101,382,'72,342 150,345 153,412 125,412 124,475 75,475 70,458','#efc092',G],
['Golden Valley',40,416,'22,338 72,342 70,458 75,475 48,475 48,488 14,488','#edb58c',G],
['Stark',198,442,'125,412 268,408 270,475 124,475',R,B],
['Oliver',369,385,'316,365 385,362 400,352 415,362 418,412 313,412','#f0bd8c',N],
['Morton',403,463,'270,412 418,412 440,440 455,475 470,492 465,525 410,532 375,530 373,482 320,480 318,462 272,462',R,B],
['Burleigh',482,412,'420,380 445,380 445,350 527,348 532,480 455,480 440,440 418,412',R,B],
['Kidder',574,412,'527,348 610,348 617,478 532,480',O,G],
['Stutsman',680,411,'612,348 738,347 745,478 617,478',R,G],
['Barnes',796,415,'740,360 838,358 845,476 745,478','#e06a50',G],
['Cass',900,412,'840,358 952,355 962,420 962,475 845,476',R,B],
['Slope',92,506,'14,488 48,488 48,475 160,478 162,542 12,538',T,L],
['Hettinger',223,509,'160,478 272,475 275,555 240,555 238,545 162,545','#f0c092',N],
['Bowman',80,568,'12,538 150,545 150,605 10,600','#ecb087',L],
['Adams',210,580,'150,545 238,545 240,555 275,555 282,560 282,607 150,605',T,L],
['Grant',331,532,'272,462 318,462 320,480 373,482 375,530 410,532 395,570 350,597 330,598 285,590 278,555',T,N],
['LaMoure',735,508,'660,478 790,478 795,545 662,545','#edb58c',G],
['Ransom',850,508,'790,478 900,476 905,543 795,545','#e59a7a',L],
['Emmons',515,545,'470,482 552,482 560,610 478,610 465,565 465,525','#e59a7a',G],
['Logan',611,512,'552,480 660,478 662,545 556,547','#f0bd8c',N],
['Richland',944,538,'900,476 962,474 985,520 1000,600 915,603 905,543',R,'#5b9ba3'],
['Sioux',433,566,'410,532 465,525 465,565 475,610 282,607 285,590 330,598 350,597 395,570',R,B],
['McIntosh',616,577,'556,547 675,545 677,610 562,610','#e06a50','#7fa9ad'],
['Dickey',750,575,'675,545 795,545 798,608 677,610','#edb58c',L],
['Sargent',858,573,'795,545 905,543 915,603 798,608','#efc092',L]];
function map(id, col, boxX, names, swatches) {
  let s = '<g transform="translate(60,5675) scale(.33333)">';
  COUNTIES.forEach(c => { s += `<polygon class="county" points="${c[3]}" fill="${c[col]}"/>`; });
  COUNTIES.forEach(c => { s += txt(col === 5 && (c[5] === B || c[0] === 'Mountrail') ? 'cl inv' : 'cl', c[1], c[2] + 10, c[0]); });
  s += `<rect x="${boxX}" y="395" width="${1008 - boxX}" height="220" fill="#fff" fill-opacity=".6"/>`;
  names.forEach((n, i) => {
    const y = [454, 511, 564][i];
    s += `<rect x="${boxX + 30}" y="${y - 22}" width="45" height="45" fill="${swatches[i]}"/>` + txt('ml', boxX + 91, y + 9, n);
  });
  s += '<rect class="zb" x="915" y="37" width="69" height="68" rx="6"/><rect class="zb" x="915" y="109" width="69" height="68" rx="6"/>' + txt('zt', 949.5, 80, '+') + txt('zt', 949.5, 151, '−');
  put(id, s + '</g>');
}
map('map-cases', 4, 660, ['More cases', 'Fewer cases', '0 cases'], ['#db513c', T, '#ccc']);
map('map-active', 5, 546, ['More Active cases', 'Fewer Active cases', '0 Active cases'], [B, G, '#bbb']);
```
